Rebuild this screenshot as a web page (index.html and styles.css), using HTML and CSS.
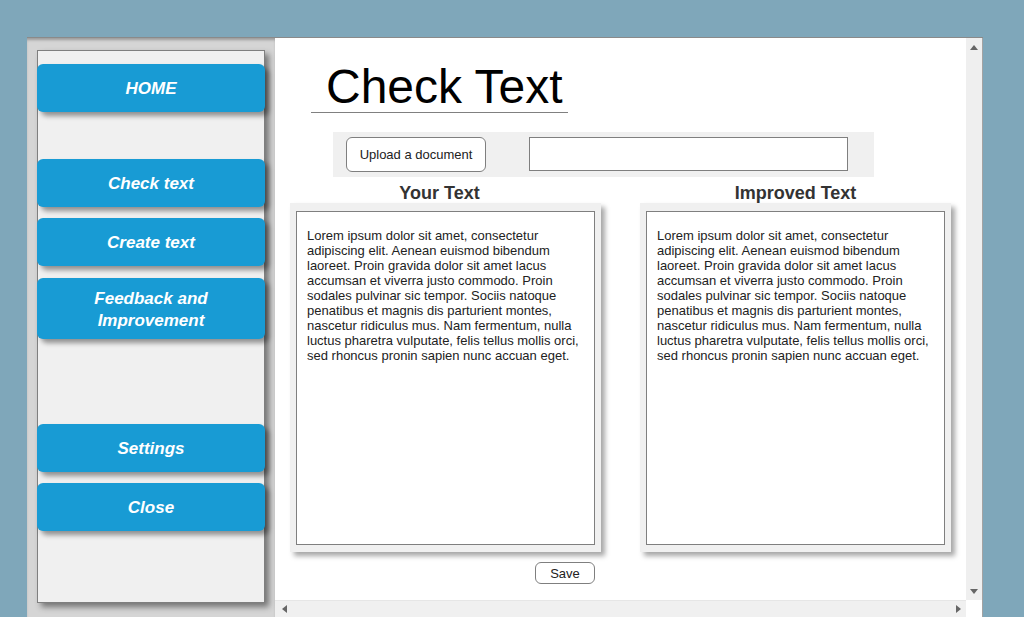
FILE: index.html
```html
<!DOCTYPE html>
<html>
<head>
<meta charset="utf-8">
<title>Check Text</title>
<link rel="stylesheet" href="styles.css">
</head>
<body>
<div class="window">
  <aside class="sidebar">
    <nav class="panel">
      <div class="nav-btn home">HOME</div>
      <div class="nav-btn check">Check text</div>
      <div class="nav-btn create">Create text</div>
      <div class="nav-btn feedback">Feedback and<br>Improvement</div>
      <div class="nav-btn settings">Settings</div>
      <div class="nav-btn close">Close</div>
    </nav>
  </aside>
  <main class="main">
    <section class="content">
      <h1 class="title">Check Text</h1>
      <div class="upload-bar">
        <button class="upload-btn">Upload a document</button>
        <div class="file-input"></div>
      </div>
      <div class="columns">
        <div class="column">
          <h2 class="col-heading left">Your Text</h2>
          <div class="card">
            <div class="text-box">Lorem ipsum dolor sit amet, consectetur adipiscing elit. Aenean euismod bibendum laoreet. Proin gravida dolor sit amet lacus accumsan et viverra justo commodo. Proin sodales pulvinar sic tempor. Sociis natoque penatibus et magnis dis parturient montes, nascetur ridiculus mus. Nam fermentum, nulla luctus pharetra vulputate, felis tellus mollis orci, sed rhoncus pronin sapien nunc accuan eget.</div>
          </div>
          <button class="save-btn">Save</button>
        </div>
        <div class="column">
          <h2 class="col-heading">Improved Text</h2>
          <div class="card">
            <div class="text-box">Lorem ipsum dolor sit amet, consectetur adipiscing elit. Aenean euismod bibendum laoreet. Proin gravida dolor sit amet lacus accumsan et viverra justo commodo. Proin sodales pulvinar sic tempor. Sociis natoque penatibus et magnis dis parturient montes, nascetur ridiculus mus. Nam fermentum, nulla luctus pharetra vulputate, felis tellus mollis orci, sed rhoncus pronin sapien nunc accuan eget.</div>
          </div>
        </div>
      </div>
    </section>
    <div class="vscroll">
      <span class="arrow up"></span>
      <span class="arrow down"></span>
    </div>
    <div class="hscroll">
      <span class="arrow left"></span>
      <span class="arrow right"></span>
    </div>
    <div class="corner"></div>
  </main>
</div>
</body>
</html>
```

FILE: styles.css
```css
* { box-sizing: border-box; }

body {
  margin: 0;
  background: #7fa7ba;
  font-family: "Liberation Sans", Arial, sans-serif;
  overflow: hidden;
}

.window {
  margin: 37px 0 0 27px;
  width: 956px;
  height: 580px;
  display: flex;
  border-top: 1px solid #8a8a8a;
}

/* Sidebar */
.sidebar {
  width: 248px;
  height: 100%;
  background: #d5d5d5;
  padding: 12px 0 0 10px;
  box-shadow: inset 0 3px 3px -1px rgba(0, 0, 0, 0.28);
}

.panel {
  width: 228px;
  height: 553px;
  border: 1px solid #7f7f7f;
  background: #f0f0f0;
  box-shadow: 4px 4px 6px rgba(0, 0, 0, 0.45);
  display: flex;
  flex-direction: column;
  padding-top: 13px;
}

.nav-btn {
  margin: 0 -1px;
  height: 48px;
  padding-top: 2px;
  background: #189bd4;
  color: #ffffff;
  font-weight: bold;
  font-style: italic;
  font-size: 17px;
  line-height: 22px;
  border-radius: 6px;
  box-shadow: 4px 4px 5px rgba(0, 0, 0, 0.4);
  display: flex;
  align-items: center;
  justify-content: center;
  text-align: center;
  flex-shrink: 0;
}

.nav-btn.check { margin-top: 47px; }
.nav-btn.create { margin-top: 11px; }
.nav-btn.feedback { margin-top: 12px; height: 61px; }
.nav-btn.settings { margin-top: 85px; }
.nav-btn.close { margin-top: 11px; }

/* Main area */
.main {
  flex: 1;
  height: 100%;
  display: grid;
  grid-template-columns: 1fr 17px;
  grid-template-rows: 1fr 17px;
  background: #ffffff;
}

.content {
  overflow: hidden;
  color: #222;
}

.title {
  margin: 23px 0 0 36px;
  width: 257px;
  padding-left: 15px;
  font-size: 48px;
  line-height: 51px;
  font-weight: normal;
  color: #000;
  border-bottom: 1px solid #808080;
}

.upload-bar {
  margin: 19px 0 0 58px;
  width: 541px;
  height: 45px;
  background: #f0f0f0;
  display: flex;
  align-items: flex-start;
  gap: 43px;
  padding: 5px 13px;
}

.upload-btn {
  width: 140px;
  height: 35px;
  border: 1px solid #7f7f7f;
  border-radius: 6px;
  background: #ffffff;
  font-family: "Liberation Sans", Arial, sans-serif;
  font-size: 13px;
  color: #222;
  padding: 0;
}

.file-input {
  width: 319px;
  height: 34px;
  border: 1px solid #7f7f7f;
  background: #ffffff;
}

.columns {
  display: flex;
  gap: 39px;
  margin: 6px 0 0 15px;
}

.column {
  width: 311px;
  display: flex;
  flex-direction: column;
}

.col-heading {
  margin: 0;
  font-size: 18px;
  line-height: 20px;
  font-weight: bold;
  color: #333;
  text-align: center;
}

.col-heading.left { padding-right: 12px; }

.card {
  height: 349px;
  background: #f0f0f0;
  padding: 8px 6px 7px 6px;
  box-shadow: 4px 4px 5px rgba(0, 0, 0, 0.35);
}

.text-box {
  height: 100%;
  background: #ffffff;
  border: 1px solid #7f7f7f;
  padding: 16px 7px 10px 10px;
  font-size: 13px;
  line-height: 15px;
  color: #222;
}

.save-btn {
  align-self: flex-end;
  margin: 10px 6px 0 0;
  width: 60px;
  height: 22px;
  border: 1px solid #7f7f7f;
  border-radius: 6px;
  background: #ffffff;
  font-family: "Liberation Sans", Arial, sans-serif;
  font-size: 13px;
  color: #222;
  padding: 0;
}

/* Scrollbars */
.vscroll {
  background: #efefef;
  border-right: 1px solid #a3a3a3;
  display: flex;
  flex-direction: column;
  justify-content: space-between;
  align-items: center;
  padding: 7px 0 6px;
}

.hscroll {
  background: #f0f0f0;
  border-top: 1px solid #e6e6e6;
  display: flex;
  justify-content: space-between;
  align-items: center;
  padding: 0 5px 0 7px;
}

.corner {
  background: #ffffff;
  border-right: 1px solid #a3a3a3;
}

.arrow {
  display: block;
  width: 0;
  height: 0;
}

.arrow.up {
  border-left: 4.5px solid transparent;
  border-right: 4.5px solid transparent;
  border-bottom: 5px solid #666;
}

.arrow.down {
  border-left: 4.5px solid transparent;
  border-right: 4.5px solid transparent;
  border-top: 5px solid #666;
}

.arrow.left {
  border-top: 4px solid transparent;
  border-bottom: 4px solid transparent;
  border-right: 5px solid #666;
}

.arrow.right {
  border-top: 4px solid transparent;
  border-bottom: 4px solid transparent;
  border-left: 5px solid #666;
}
```
